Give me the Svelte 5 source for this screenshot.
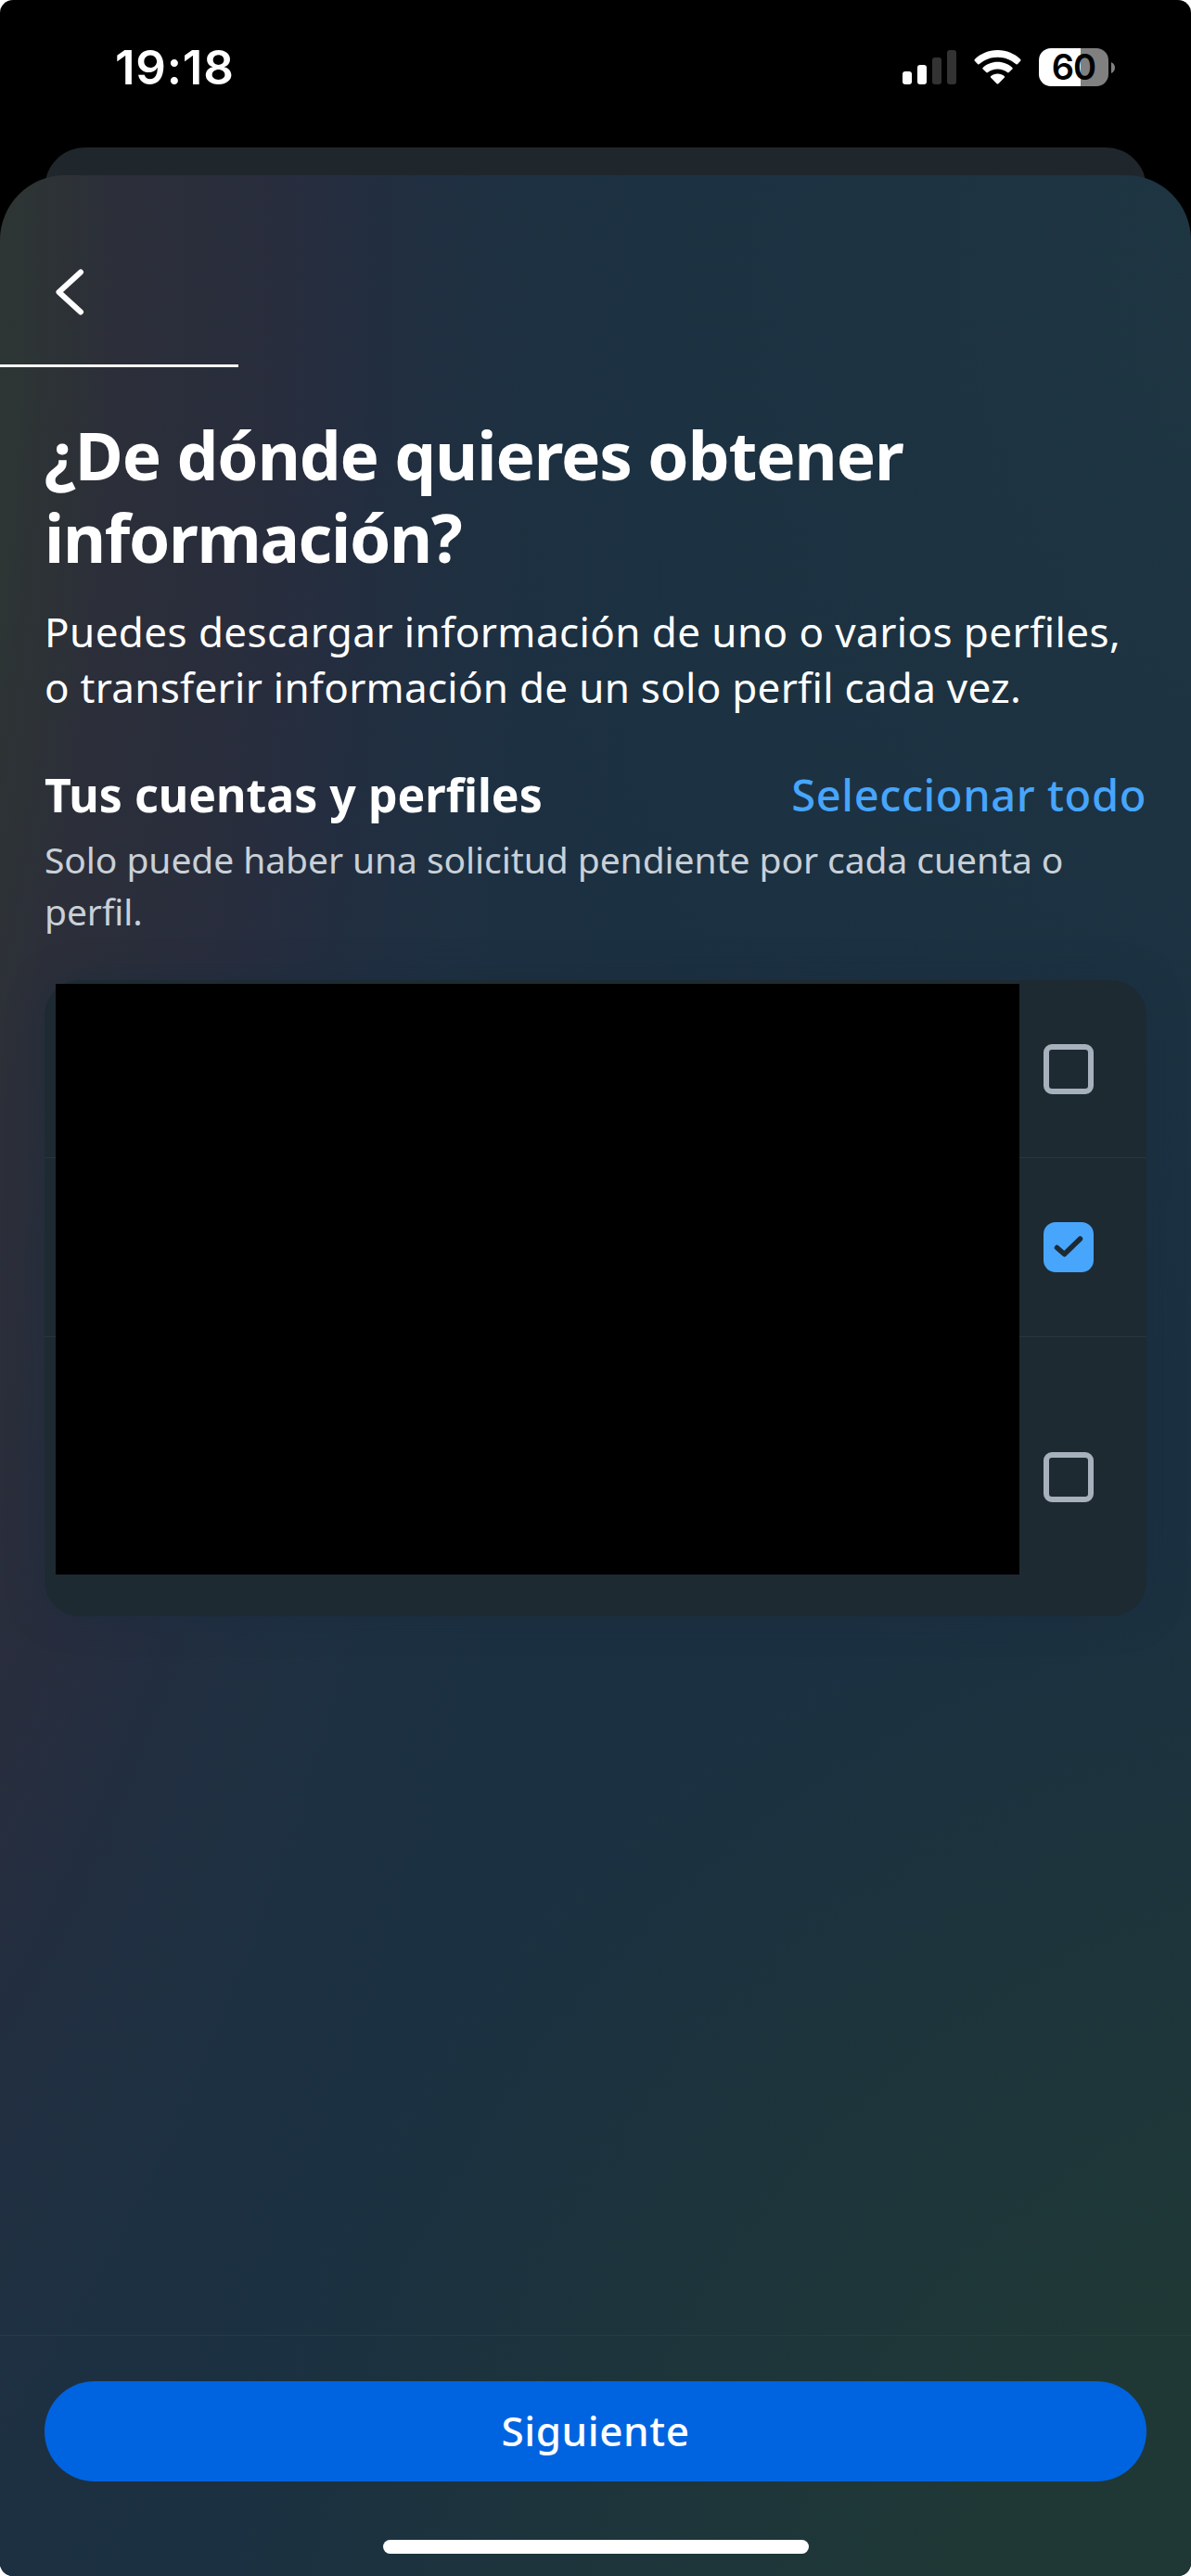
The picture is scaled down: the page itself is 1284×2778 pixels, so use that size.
<script>
  let accounts = $state([
    { id: 1, checked: false },
    { id: 2, checked: true },
    { id: 3, checked: false, tall: true }
  ]);
</script>

<div class="phone">
  <header class="status">
    <time>19:18</time>
    <div class="indicators">
      <svg class="signal" viewBox="0 0 58 37">
        <rect x="0" y="23" width="10" height="14" rx="3" fill="#fff" />
        <rect x="16" y="16" width="10" height="21" rx="3" fill="#fff" />
        <rect x="32" y="8" width="10" height="29" rx="3" fill="#333" />
        <rect x="48" y="0" width="10" height="37" rx="3" fill="#333" />
      </svg>
      <svg class="wifi" viewBox="0 0 51 37" fill="#fff">
        <path d="M25.5 0C35.3 0 44 3.9 50.2 10Q51 10.9 50.2 11.8L46.8 15.2Q46 15.8 45.1 15.1C39.9 10.4 33.1 7.7 25.5 7.7S11.1 10.4 5.9 15.1Q5 15.8 4.2 15.2L.8 11.8Q0 10.9 .8 10C7 3.9 15.700 0 25.500 0Z" />
        <path d="M25.500 12.800C31.700 12.800 37.200 15.100 41.400 18.900Q42.200 19.700 41.400 20.500L37.700 24.100Q36.900 24.800 36 24.100C33.100 21.800 29.500 20.500 25.500 20.500S17.900 21.800 15 24.100Q14.100 24.800 13.300 24.100L9.600 20.500Q8.800 19.700 9.600 18.900C13.800 15.100 19.300 12.800 25.500 12.800Z" />
        <path d="M25.500 25.600C28.300 25.600 30.800 26.500 32.700 28Q33.600 28.800 32.800 29.700L26.400 36.200Q25.500 37 24.600 36.200L18.200 29.700Q17.400 28.800 18.300 28C20.200 26.500 22.700 25.600 25.500 25.600Z" />
      </svg>
      <div class="battery"><span>60</span></div>
      <svg class="tip" viewBox="0 0 4 12"><path d="M0 0Q4 2 4 6T0 12Z" fill="#808080" /></svg>
    </div>
  </header>

  <div class="behind"></div>

  <main class="sheet">
    <nav>
      <button class="back" aria-label="Atrás">
        <svg viewBox="0 0 32 50">
          <path d="M28 3.500L4.500 25L28 46.500" fill="none" stroke="#fff" stroke-width="6" stroke-linecap="round" stroke-linejoin="round" />
        </svg>
      </button>
    </nav>
    <div class="progress"></div>

    <section class="content">
      <h1><span class="t1">¿De dónde quieres obtener</span><br /><span class="t2">información?</span></h1>
      <p class="lead"><span class="l1">Puedes descargar información de uno o varios perfiles,</span><br /><span class="l2">o transferir información de un solo perfil cada vez.</span></p>
      <div class="heading">
        <h2>Tus cuentas y perfiles</h2>
        <button class="all">Seleccionar todo</button>
      </div>
      <p class="note">Solo puede haber una solicitud pendiente por cada cuenta o<br />perfil.</p>

      <div class="card">
        {#each accounts as account (account.id)}
          <div class="row" class:tall={account.tall}>
            <button
              class="box"
              class:checked={account.checked}
              aria-label="Seleccionar"
              onclick={() => (account.checked = !account.checked)}
            >
              {#if account.checked}
                <svg viewBox="0 0 54 54"><path d="M14.500 27.500L22.500 34.500L39.500 18" fill="none" stroke="#1e2a32" stroke-width="5.500" stroke-linecap="round" stroke-linejoin="round" /></svg>
              {/if}
            </button>
          </div>
        {/each}
        <div class="redacted"></div>
      </div>
    </section>

    <footer>
      <button class="next">Siguiente</button>
      <div class="home"></div>
    </footer>
  </main>
</div>

<style>
  :global(body) {
    margin: 0;
    background: #fff;
  }
  .phone {
    width: 1284px;
    height: 2778px;
    display: flex;
    flex-direction: column;
    background: #000;
    border-radius: 14px;
    overflow: hidden;
    font-family: 'Noto Sans', sans-serif;
    color: #fff;
  }
  button {
    border: 0;
    padding: 0;
    background: none;
    font: inherit;
    color: inherit;
  }
  h1, h2, p {
    margin: 0;
    white-space: nowrap;
  }
  .status {
    height: 159px;
    flex: none;
    box-sizing: border-box;
    padding: 52px 82px 0 124px;
    display: flex;
    justify-content: space-between;
    align-items: flex-start;
  }
  time {
    font: 600 51px/41px Inter, sans-serif;
    letter-spacing: 0.8px;
  }
  .indicators {
    display: flex;
    align-items: center;
    height: 41px;
  }
  .signal {
    width: 58px;
    height: 37px;
    margin-right: 19px;
  }
  .wifi {
    width: 51px;
    height: 37px;
    margin-right: 19px;
  }
  .battery {
    width: 75px;
    height: 41px;
    border-radius: 13px;
    background: linear-gradient(90deg, #fff 45px, #808080 45px);
    color: #000;
    text-align: center;
    font: 600 38px/41px Inter, sans-serif;
    letter-spacing: -1px;
  }
  .tip {
    width: 4px;
    height: 12px;
    margin-left: 3px;
  }
  .behind {
    height: 90px;
    flex: none;
    margin: 0 48px -60px;
    border-radius: 44px 44px 0 0;
    background: #20272c;
  }
  .sheet {
    flex: 1;
    display: flex;
    flex-direction: column;
    border-radius: 70px 70px 0 0;
    background:
      radial-gradient(1350px 1400px at 1550px 2800px, #1f3836 0%, #1f3836 42%, rgba(29, 52, 60, 0) 100%),
      radial-gradient(900px 1200px at 1400px 100px, rgba(31, 54, 66, 0.9), rgba(31, 54, 66, 0)),
      radial-gradient(1500px 3500px at -600px 100px, #2d3634 40%, #2d3335 43%, #2c2f39 48%, #282d3d 60%, #222e40 67%, #1e3041 75%, #1b3041 86%);
  }
  nav {
    height: 204px;
    flex: none;
    box-sizing: border-box;
    padding: 101px 0 0 59px;
  }
  .back,
  .back svg {
    display: block;
    width: 32px;
    height: 50px;
  }
  .progress {
    width: 257px;
    height: 3px;
    flex: none;
    background: #fff;
  }
  .content {
    flex: 1;
    padding: 50px 48px 0;
  }
  h1 {
    font-size: 71px;
    line-height: 89px;
    font-weight: 700;
  }
  .t1 {
    letter-spacing: -1.05px;
  }
  .t2 {
    letter-spacing: -1.3px;
  }
  .lead {
    margin-top: 27px;
    font-size: 44px;
    line-height: 60px;
  }
  .l1 {
    letter-spacing: 0.41px;
  }
  .l2 {
    letter-spacing: 0.27px;
  }
  .heading {
    margin-top: 48px;
    height: 76px;
    display: flex;
    justify-content: space-between;
    align-items: center;
  }
  h2 {
    font-size: 50px;
    line-height: 76px;
    font-weight: 700;
  }
  .all {
    font-size: 47px;
    line-height: 76px;
    font-weight: 500;
    letter-spacing: 0.6px;
    color: #47a5fc;
  }
  .note {
    margin-top: 4px;
    font-size: 39px;
    line-height: 56px;
    letter-spacing: -0.07px;
    color: #c9d0d8;
  }
  .card {
    position: relative;
    margin-top: 46px;
    height: 686px;
    border-radius: 38px;
    background: #1e2a32;
    box-shadow: 0 0 36px rgba(24, 44, 62, 0.5);
  }
  .row {
    height: 192px;
    box-sizing: border-box;
    border-bottom: 1px solid #2a363e;
    display: flex;
    align-items: center;
    justify-content: flex-end;
    padding-right: 57px;
  }
  .row + .row {
    height: 193px;
  }
  .row.tall:last-of-type,
  .row + .row.tall {
    height: 302px;
    border: 0;
  }
  .box {
    width: 54px;
    height: 54px;
    box-sizing: border-box;
    border: 6px solid #a6b1bd;
    border-radius: 9px;
  }
  .box.checked {
    border: 0;
    border-radius: 13px;
    background: #47a5fc;
  }
  .box svg {
    display: block;
    width: 54px;
    height: 54px;
  }
  .redacted {
    position: absolute;
    left: 12px;
    top: 4px;
    width: 1039px;
    height: 637px;
    background: #000;
  }
  footer {
    height: 260px;
    flex: none;
    box-sizing: border-box;
    border-top: 1px solid #293a43;
    padding: 49px 48px 0;
    display: flex;
    flex-direction: column;
    align-items: center;
  }
  .next {
    width: 100%;
    height: 108px;
    padding-bottom: 3px;
    border-radius: 54px;
    background: #0064e0;
    font-size: 44px;
    font-weight: 500;
    letter-spacing: 0.6px;
  }
  .home {
    margin-top: 63px;
    width: 459px;
    height: 15px;
    border-radius: 8px;
    background: #fff;
  }
</style>
